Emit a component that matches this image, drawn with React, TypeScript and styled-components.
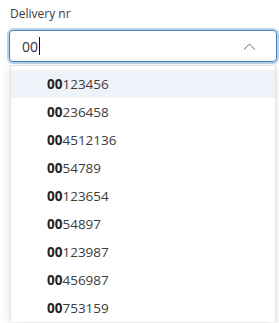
import React from "react";
import { styled, createGlobalStyle } from "styled-components";

const GlobalStyle = createGlobalStyle`
  body {
    margin: 0;
    background: #ffffff;
    font-family: "Open Sans", "Noto Sans", sans-serif;
    color: #333;
  }
`;

const Wrapper = styled.div`
  width: 279px;
  height: 323px;
  overflow: hidden;
  padding: 6px 2px 0 9px;
  box-sizing: border-box;
`;

const Label = styled.div`
  font-size: 12px;
  line-height: 16px;
  color: #3a3a3a;
  padding-left: 1px;
  margin-bottom: 8px;
`;

const Field = styled.div`
  display: flex;
  align-items: center;
  height: 32px;
  box-sizing: border-box;
  border: 1px solid #3f7fc0;
  border-radius: 4px;
  box-shadow: 0 0 0 2px #bcd3ea;
  padding: 0 20px 0 12px;
  font-size: 14px;
  color: #333;
`;

const Value = styled.span`
  flex: 1;
  display: flex;
  align-items: center;
`;

const Caret = styled.span`
  display: inline-block;
  width: 1px;
  height: 18px;
  background: #111;
  margin-left: 1px;
`;

const Menu = styled.ul`
  list-style: none;
  margin: 3px 1px 0 1px;
  padding: 4px 0 0;
  background: #fff;
  border: 1px solid #e2e4e6;
  border-bottom: none;
  box-shadow: 0 2px 12px rgba(0, 0, 0, 0.12);
`;

const Item = styled.li<{ $active?: boolean }>`
  height: 28px;
  display: flex;
  align-items: center;
  padding-left: 36px;
  font-size: 13.5px;
  color: #3c3c3c;
  background: ${(p) => (p.$active ? "#eef3f9" : "transparent")};

  b {
    font-weight: 700;
    color: #222;
  }
`;

const Chevron = () => (
  <svg width="13" height="7" viewBox="0 0 13 7">
    <polyline
      points="1,6.5 6.5,1.2 12,6.5"
      fill="none"
      stroke="#666"
      strokeWidth="1"
    />
  </svg>
);

const query = "00";
const options = [
  "00123456",
  "00236458",
  "004512136",
  "0054789",
  "00123654",
  "0054897",
  "00123987",
  "00456987",
  "00753159",
];

export default function App() {
  return (
    <Wrapper>
      <GlobalStyle />
      <Label>Delivery nr</Label>
      <Field>
        <Value>
          {query}
          <Caret />
        </Value>
        <Chevron />
      </Field>
      <Menu>
        {options.map((o, i) => (
          <Item key={o} $active={i === 0}>
            <b>{o.slice(0, query.length)}</b>
            {o.slice(query.length)}
          </Item>
        ))}
      </Menu>
    </Wrapper>
  );
}
